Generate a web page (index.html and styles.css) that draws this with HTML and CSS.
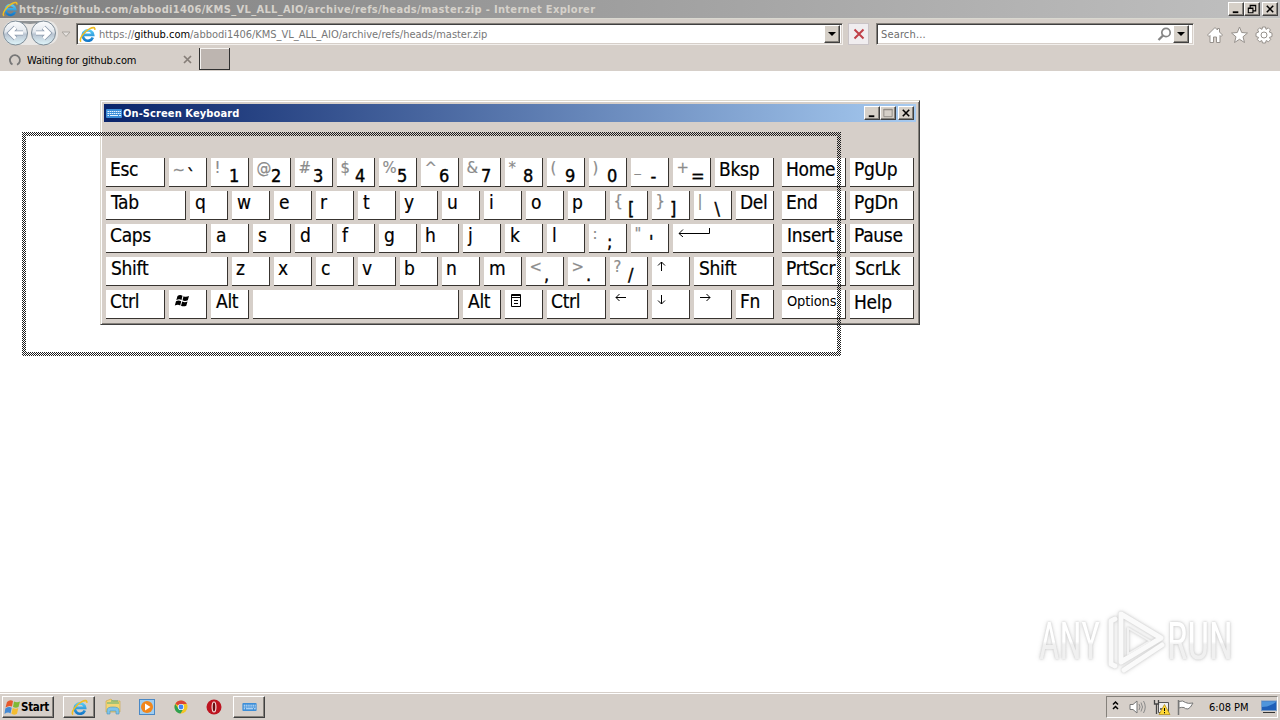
FILE: index.html
```
<!DOCTYPE html>
<html lang="en">
<head>
<meta charset="utf-8">
<title>On-Screen Keyboard</title>
<link rel="stylesheet" href="styles.css">
</head>
<body>
<svg class="defs" width="0" height="0">
  <defs>
    <linearGradient id="blue" x1="0" y1="0" x2="0" y2="1"><stop offset="0" stop-color="#55c8f4"/><stop offset="1" stop-color="#1479c9"/></linearGradient>
    <linearGradient id="nav" x1="0" y1="0" x2="0" y2="1"><stop offset="0" stop-color="#fbfcfd"/><stop offset=".45" stop-color="#e3e8ee"/><stop offset=".55" stop-color="#b9c4d1"/><stop offset="1" stop-color="#e0f6fb"/></linearGradient>
    <linearGradient id="logo" x1="0" y1="0" x2="0" y2="1"><stop offset=".5" stop-color="#fff"/><stop offset=".55" stop-color="#f0f0f0"/></linearGradient>
    <symbol id="ie" viewBox="0 0 16 16">
      <path d="M13 10.800A4.900 4.900 0 1 1 13.300 8.300H4.500" fill="none" stroke="url(#blue)" stroke-width="2.500"/>
      <path d="M2 14.800C-.5 13 4.200 5.500 10.200 2.500 13 1.100 15.400.9 14.800 3.700" fill="none" stroke="#f0bd22" stroke-width="1.500"/>
    </symbol>
    <symbol id="kbd" viewBox="0 0 16 9">
      <rect width="16" height="9" rx="1" fill="#3d8ed8"/>
      <path d="M1.500 2.500H15M1.500 4.500H15" stroke="#e8f4ff" stroke-width="1" stroke-dasharray="1.500 .6"/>
      <path d="M1.500 6.500H3M4 6.500H12M13 6.500H15" stroke="#e8f4ff"/>
    </symbol>
  </defs>
</svg>

<header class="browser">
  <div class="titlebar">
    <svg class="title-ie" width="16" height="16"><use href="#ie"/></svg>
    <span class="title-text">https://github.com/abbodi1406/KMS_VL_ALL_AIO/archive/refs/heads/master.zip - Internet Explorer</span>
    <div class="winbtns">
      <svg class="wb" viewBox="0 0 15 13"><path d="M4 10H10" stroke="#000" stroke-width="2"/></svg>
      <svg class="wb" viewBox="0 0 15 13"><path d="M5.500 5V2.500H11.500V8.500H9M5 3H12M3.500 5.500H8.500V10.500H3.500ZM3 6H9" fill="none" stroke="#000" stroke-width="1.200"/></svg>
      <svg class="wb last" viewBox="0 0 15 13"><path d="M4 3L11 10M11 3L4 10" stroke="#000" stroke-width="1.700"/></svg>
    </div>
  </div>
  <div class="toolbar">
    <svg class="nav" width="72" height="28" viewBox="0 0 72 28">
      <path d="M14 1H44Q57 2 57 14T44 26H14Q2 25 2 14T14 1Z" fill="#e9e7e5"/>
      <path d="M12 2H46Q29 8 12 2" fill="#8f9294"/>
      <circle cx="14.500" cy="14" r="12" fill="url(#nav)" stroke="#7e8c97"/>
      <circle cx="42.500" cy="14" r="12" fill="url(#nav)" stroke="#7e8c97"/>
      <path d="M22 14H9M14.500 8.500L9 14L14.500 19.500M35 14H48M42.500 8.500L48 14L42.500 19.500" fill="none" stroke="#8c9bad" stroke-width="5"/>
      <path d="M22 14H9M14.500 8.500L9 14L14.500 19.500M35 14H48M42.500 8.500L48 14L42.500 19.500" fill="none" stroke="#fff" stroke-width="3.400"/>
      <path d="M61 13H69L65 17.500Z" fill="#e5e1de" stroke="#aaa59f"/>
    </svg>
    <div class="field address">
      <svg width="17" height="17"><use href="#ie"/></svg>
      <span class="url">https://<b>github.com</b>/abbodi1406/KMS_VL_ALL_AIO/archive/refs/heads/master.zip</span>
      <span class="drop"></span>
    </div>
    <div class="stop"><svg width="12" height="12" viewBox="0 0 12 12"><path d="M1.500 1.500L10.500 10.500M10.500 1.500L1.500 10.500" stroke="#c04048" stroke-width="2"/></svg></div>
    <div class="field search">
      <span class="hint">Search...</span>
      <svg width="15" height="15" viewBox="0 0 15 15"><circle cx="9" cy="5.500" r="4.200" fill="none" stroke="#858585" stroke-width="1.700"/><path d="M6 8.500L1.500 13" stroke="#858585" stroke-width="2.300"/></svg>
      <span class="drop"></span>
    </div>
    <svg class="tools" width="70" height="20" viewBox="0 0 70 20" fill="#fff" stroke="#96918c">
      <path d="M1.500 10L9 2.500L11.500 5V3.500H13.500V7L16.500 10L15 11.500L14 10.500V17.500H10.500V12H7.500V17.500H4V10.500L3 11.500Z"/>
      <path d="M33.500 2L35.700 7.500L41.500 8L37 11.800L38.500 17.500L33.500 14.300L28.500 17.500L30 11.800L25.500 8L31.300 7.500Z"/>
      <g transform="translate(58 10)"><path d="M-1.500-8H1.500L2-5.600L4.300-7.200L6.400-5.100L5.300-3L8-1.800V1.500L5.400 2.400L6.700 4.500L4.400 6.800L2.200 5.500L1.500 8H-1.500L-2.200 5.500L-4.400 6.800L-6.700 4.500L-5.400 2.400L-8 1.500V-1.800L-5.300-3L-6.400-5.100L-4.300-7.200L-2-5.600Z"/><circle r="3"/></g>
    </svg>
  </div>
  <div class="tabs">
    <div class="tab">
      <svg width="14" height="14" viewBox="0 0 14 14"><path d="M4.500 11.500A5 5 0 1 1 9 11.700" fill="none" stroke="#777" stroke-width="1.800"/></svg>
      <span class="tab-text">Waiting for github.com</span>
      <svg class="tab-x" width="9" height="9" viewBox="0 0 9 9"><path d="M1 1L8 8M8 1L1 8" stroke="#857e78" stroke-width="1.700"/></svg>
    </div>
    <div class="newtab"></div>
  </div>
</header>

<main class="page">
  <section class="osk">
    <div class="osk-title">
      <svg width="16" height="9"><use href="#kbd"/></svg>
      <span class="osk-name">On-Screen Keyboard</span>
      <div class="winbtns">
        <svg class="wb" viewBox="0 0 15 13"><path d="M4 10H10" stroke="#000" stroke-width="2"/></svg>
        <svg class="wb" viewBox="0 0 15 13"><path d="M3 2.500H12V10.500H3ZM2.500 3H12.500" fill="none" stroke="#8d8983"/></svg>
        <svg class="wb last" viewBox="0 0 15 13"><path d="M4 3L11 10M11 3L4 10" stroke="#000" stroke-width="1.700"/></svg>
      </div>
    </div>
    <div class="keys">
      <div class="main">
        <div class="row"><div class="key w59">Esc</div><div class="key tilde"><i>~</i><b>`</b></div><div class="key"><i>!</i><b>1</b></div><div class="key"><i>@</i><b>2</b></div><div class="key"><i>#</i><b>3</b></div><div class="key"><i>$</i><b>4</b></div><div class="key"><i>%</i><b>5</b></div><div class="key"><i>^</i><b>6</b></div><div class="key"><i>&amp;</i><b>7</b></div><div class="key"><i>*</i><b>8</b></div><div class="key"><i>(</i><b>9</b></div><div class="key"><i>)</i><b>0</b></div><div class="key"><i class="up">_</i><b class="dash">-</b></div><div class="key"><i>+</i><b>=</b></div><div class="key grow">Bksp</div></div>
        <div class="row"><div class="key w80 in">Tab</div><div class="key in">q</div><div class="key in">w</div><div class="key in">e</div><div class="key">r</div><div class="key in">t</div><div class="key">y</div><div class="key in">u</div><div class="key in">i</div><div class="key in">o</div><div class="key">p</div><div class="key"><i>{</i><b>[</b></div><div class="key"><i>}</i><b>]</b></div><div class="key"><i>|</i><b class="back">\</b></div><div class="key grow">Del</div></div>
        <div class="row"><div class="key w101">Caps</div><div class="key in">a</div><div class="key in">s</div><div class="key in">d</div><div class="key in">f</div><div class="key in">g</div><div class="key">h</div><div class="key in">j</div><div class="key in">k</div><div class="key in">l</div><div class="key"><i>:</i><b>;</b></div><div class="key"><i>"</i><b>'</b></div><div class="key grow"><svg width="34" height="13" viewBox="0 0 34 13"><path d="M2 9.500H32.500V4M6 5.500L2 9.500L6 13" fill="none" stroke="#000"/></svg></div></div>
        <div class="row"><div class="key w122 in">Shift</div><div class="key">z</div><div class="key">x</div><div class="key in">c</div><div class="key">v</div><div class="key">b</div><div class="key">n</div><div class="key in">m</div><div class="key"><i>&lt;</i><b>,</b></div><div class="key"><i>&gt;</i><b>.</b></div><div class="key"><i>?</i><b>/</b></div><div class="key"><svg width="12" height="16" viewBox="0 0 12 16"><path d="M5.500 14V5M2 8.500L5.500 5L9 8.500" fill="none" stroke="#000"/></svg></div><div class="key grow in">Shift</div></div>
        <div class="row"><div class="key w59">Ctrl</div><div class="key"><svg width="18" height="20" viewBox="0 0 18 20"><path d="M4.500 6Q7 4 9.500 5.800L8.500 10Q6 8.500 3.300 10.200ZM10.500 6.200Q13 7.500 16 6L14.800 10.200Q12 11.500 9.500 10.300ZM3 11.200Q5.500 9.800 8.200 11.200L7.200 15.500Q5 14 1.800 15.600ZM9.200 11.500Q12 13 14.500 11.500L13.300 15.700Q10.500 17 8 15.700Z"/></svg></div><div class="key in">Alt</div><div class="key space"></div><div class="key in">Alt</div><div class="key"><svg width="16" height="20" viewBox="0 0 16 20"><path d="M2.500 4.500H11.500V16.500H2.500ZM2 5.500H12M2 7.500H12M5 10.500H9M5 13.500H9" fill="none" stroke="#000"/></svg></div><div class="key w59">Ctrl</div><div class="key"><svg width="14" height="16" viewBox="0 0 14 16"><path d="M2 7.500H12M5.500 4L2 7.500L5.500 11" fill="none" stroke="#000"/></svg></div><div class="key"><svg width="12" height="16" viewBox="0 0 12 16"><path d="M5.500 5V14M2 10.500L5.500 14L9 10.500" fill="none" stroke="#000"/></svg></div><div class="key"><svg width="14" height="16" viewBox="0 0 14 16"><path d="M2 7.500H12M8.500 4L12 7.500L8.500 11" fill="none" stroke="#000"/></svg></div><div class="key grow">Fn</div></div>
      </div>
      <div class="side">
        <div class="key">Home</div><div class="key">PgUp</div>
        <div class="key">End</div><div class="key">PgDn</div>
        <div class="key in">Insert</div><div class="key">Pause</div>
        <div class="key">PrtScr</div><div class="key in">ScrLk</div>
        <div class="key small">Options</div><div class="key help">Help</div>
      </div>
    </div>
  </section>

  <svg class="drag" width="819" height="224">
    <defs><pattern id="checker" width="2" height="2" patternUnits="userSpaceOnUse"><path d="M0 0H1V1H0ZM1 1H2V2H1Z" fill="#1c1c1c" shape-rendering="crispEdges"/></pattern></defs>
    <rect x="2" y="2" width="815" height="220" fill="none" stroke="url(#checker)" stroke-width="4"/>
  </svg>

  <svg class="watermark" width="220" height="72" viewBox="0 0 220 72">
    <g fill="url(#logo)" font-family="Roboto" font-size="52" font-weight="400">
      <text x="8" y="50" textLength="61" lengthAdjust="spacingAndGlyphs">ANY</text>
      <text x="136" y="50" textLength="66" lengthAdjust="spacingAndGlyphs">RUN</text>
    </g>
    <g fill="none" stroke-linejoin="round" stroke-linecap="round" stroke="#fafafa" stroke-width="5">
      <path d="M84 10L80 12V55L84 57M90 5L130 29L90 53ZM93 61L131 36"/>
      <path d="M97 19L119 32L97 45Z" stroke="#f2f2f2" stroke-width="2"/>
    </g>
  </svg>
</main>

<footer class="taskbar">
  <div class="start">
    <svg width="17" height="17" viewBox="0 0 17 17"><path d="M3 3Q6 0 9 2L8 7.500Q5 6 1.500 8.500Z" fill="#e6592c"/><path d="M10 2.500Q13 4 16 2.500L14.500 8Q12 9.500 9 8Z" fill="#7fb934"/><path d="M1.300 9.500Q5 7 7.700 8.700L6.500 14.500Q4 12.500.5 15Z" fill="#4389d4"/><path d="M8.700 9Q12 10.500 14.300 9L13 14.700Q10 16.500 7.400 14.800Z" fill="#f4bd30"/></svg>
    <span>Start</span>
  </div>
  <div class="task"><svg width="17" height="17"><use href="#ie"/></svg></div>
  <svg class="q q1" width="18" height="18" viewBox="0 0 18 18"><path d="M2 3L7 1L9 3H16V14H2Z" fill="#f3d675" stroke="#c9a444" stroke-width=".6"/><path d="M3 5H15M7 3H14" stroke="#5ab073"/><path d="M3 16V12Q3 9 9 9T15 12V16H12V13H6V16Z" fill="#7fc4ea" stroke="#4a94bd" stroke-width=".6"/></svg>
  <svg class="q q2" width="16" height="16" viewBox="0 0 16 16"><rect x=".5" y=".5" width="15" height="15" fill="#9fcdf0" stroke="#4a88c5"/><circle cx="8" cy="8" r="6" fill="#f1861b"/><path d="M6 4.500L11.500 8L6 11.500Z" fill="#fff"/></svg>
  <svg class="q q3" width="14" height="14" viewBox="0 0 14 14"><circle cx="7" cy="7" r="6.500" fill="#f4c524"/><path d="M7 7L1.400 3.700A6.500 6.500 0 0 1 12.800 4H7Z" fill="#dc4437"/><path d="M1.200 4A6.500 6.500 0 0 0 6.500 13.500L9 9.500L4 8Z" fill="#2ea052"/><circle cx="7" cy="7" r="3.100" fill="#fff"/><circle cx="7" cy="7" r="2.400" fill="#4285f4"/></svg>
  <svg class="q q4" width="16" height="16" viewBox="0 0 16 16"><circle cx="8" cy="8" r="7.500" fill="#bd1420"/><ellipse cx="8" cy="8" rx="1.900" ry="5" fill="#6b0d12" stroke="#f6dcdc" stroke-width="1.200"/></svg>
  <div class="task t2"><svg width="15" height="8"><use href="#kbd"/></svg></div>
  <div class="tray">
    <svg width="90" height="18" viewBox="0 0 90 18">
      <path d="M6 6.500L8.500 4L11 6.500M6 11L8.500 8.500L11 11" fill="none" stroke="#000" stroke-width="1.500"/>
      <path d="M23 6.500H26L30 3V15L26 11.500H23Z" fill="#fff" stroke="#777"/><path d="M32 6Q34 9 32 12M34 4.500Q37 9 34 13.500M36.500 3Q40 9 36.500 15" fill="none" stroke="#8a8a8a"/>
      <path d="M51.500 4.500H61.500V14.500H51.500Z" fill="#eee" stroke="#555"/><path d="M47.500 2V6H51.500V2M49.500 6V16M53 11H58" fill="none" stroke="#444" stroke-width="1.300"/><path d="M57.500 6.500L63 16.500H52Z" fill="#ffd834" stroke="#a98412" stroke-width=".7"/><path d="M57.500 10V13M57.500 14V15.300" stroke="#000"/>
      <path d="M71.500 2V17" stroke="#777" stroke-width="1.500"/><path d="M72 3.500Q76 2 78.500 4.500Q81 6 86 5L83.500 9L81 11Q78 11 77 9.500Q74 9 72 10Z" fill="#fff" stroke="#777"/>
    </svg>
    <span class="clock">6:08 PM</span>
    <svg width="16" height="14" viewBox="0 0 16 14"><rect x=".5" y="1" width="15" height="9.500" fill="#1f5fb8" stroke="#7b9cc5"/><path d="M1 7Q8 7 15 2V1.500H1Z" fill="#4f95dc"/><path d="M2 12.500H14" stroke="#333"/></svg>
  </div>
</footer>
</body>
</html>
```
FILE: styles.css
```
* { box-sizing: border-box; }
body { margin: 0; width: 1280px; height: 720px; overflow: hidden; display: flex; flex-direction: column; background: #fff; font-family: "DejaVu Sans Condensed", "DejaVu Sans", sans-serif; font-stretch: condensed; font-size: 11px; color: #000; }
svg { display: block; flex: none; }
.defs { position: absolute; }
span { white-space: nowrap; }
.browser { height: 71px; background: #d6cfc9; flex: none; }
.titlebar { height: 18px; display: flex; align-items: center; padding: 0 2px; background: linear-gradient(90deg, #808080, #c0c0c0); }
.title-text { color: #d6d2cb; font-weight: 700; margin-left: 1px; letter-spacing: .33px; }
.winbtns { margin-left: auto; display: flex; }
.wb { width: 16px; height: 14px; background: #d6d0c8; border: 1px solid; border-color: #fff #404040 #404040 #fff; box-shadow: inset -1px -1px #85817b; }
.wb.last { margin-left: 2px; }
.toolbar { height: 30px; display: flex; align-items: flex-start; border-top: 1px solid #d9d8d0; }
.nav { margin: 0 0 0 1px; }
.field { height: 22px; margin-top: 4px; display: flex; align-items: center; background: #fff; border: 1px solid; border-color: #85817b #f2efec #f2efec #85817b; box-shadow: inset 1px 1px #404040, inset -1px -1px #d6cfc9; }
.address { width: 767px; margin-left: 3px; padding: 0 2px; }
.url { color: #777; margin-left: 3px; letter-spacing: -.025px; }
.url b { font-weight: 400; color: #000; }
.drop { width: 16px; height: 18px; margin-left: auto; background: #d6d0c8; border: 1px solid; border-color: #fff #404040 #404040 #fff; box-shadow: inset -1px -1px #85817b; display: flex; align-items: center; justify-content: center; }
.drop::after { content: ""; border: 4px solid transparent; border-top-color: #000; border-bottom: 0; }
.stop { width: 21px; height: 22px; margin: 4px 0 0 5px; background: #f0edef; border: 1px solid #c9c3c6; display: flex; align-items: center; justify-content: center; }
.search { width: 318px; margin-left: 7px; padding: 0 4px; }
.search svg { margin-left: auto; }
.search .drop { margin-left: 1px; }
.hint { color: #6d6d6d; letter-spacing: .15px; }
.tools { margin: 6px 0 0 12px; }
.tabs { height: 22px; display: flex; }
.tab { width: 199px; height: 23px; padding-left: 8px; display: flex; align-items: center; }
.tab-text { margin-left: 5px; letter-spacing: -.17px; padding-top: 1px; }
.tab-x { margin-left: auto; margin-right: 7px; }
.newtab { width: 31px; height: 22px; background: #bdb5b0; border: 1px solid #303030; border-width: 0 1px 1px 1px; box-shadow: inset 1px 1px #f5f3f1; }
.page { height: 621px; flex: none; position: relative; }
.osk { position: absolute; left: 100px; top: 29px; width: 820px; height: 225px; background: #d6cfc9; border: 1px solid; border-color: #dcd8ce #404040 #404040 #dcd8ce; box-shadow: inset 1px 1px #fff, inset -1px -1px #85817b; padding: 3px; }
.osk-title { height: 18px; display: flex; align-items: center; padding: 0 2px; background: linear-gradient(90deg, #0a246a, #a6caf0); color: #fff; }
.osk-name { font-weight: 700; margin-left: 1px; letter-spacing: .1px; }
.keys { display: flex; gap: 8px; padding: 36px 2px 0; font-size: 19px; }
.main { width: 668px; display: flex; flex-direction: column; gap: 4px; }
.row { display: flex; gap: 4px; }
.side { display: grid; grid-template-columns: 64px 64px; gap: 4px; }
.key { width: 38px; height: 29px; flex: none; background: #fff; border-right: 1px solid #383430; border-bottom: 1px solid #383430; padding-left: 4px; line-height: 22px; letter-spacing: -.3px; white-space: nowrap; overflow: hidden; display: flex; -webkit-text-stroke: .2px #000; }
.key.in { padding-left: 5px; }
.side .key { width: 64px; }
.key.w59 { width: 59px; }
.key.w80 { width: 80px; }
.key.w101 { width: 101px; }
.key.w122 { width: 122px; }
.key.space { width: 206px; }
.key.grow { width: auto; flex: 1; }
.key.small { font-size: 14.500px; line-height: 22px; padding-left: 5px; letter-spacing: -.15px; -webkit-text-stroke: 0; }
.key.help { line-height: 24px; }
.key i { width: 14px; margin-left: -.5px; font-style: normal; font-size: 16.500px; line-height: 20px; color: #8b8b8b; -webkit-text-stroke: .2px #8b8b8b; }
.key b { font-weight: 400; font-size: 18px; line-height: 36px; margin-left: .5px; -webkit-text-stroke: .4px #000; }
.key .up { font-size: 14px; line-height: 18px; }
.key .back { margin-left: 3px; }
.key .dash { margin-left: 2px; }
.key.tilde b { line-height: 36px; }
.key.tilde i { line-height: 23px; }
.drag { position: absolute; left: 22px; top: 61px; }
.watermark { position: absolute; left: 1031px; top: 538px; filter: drop-shadow(0 0 1px #c8c8c8) drop-shadow(0 0 2px #e2e2e2); }
.taskbar { height: 28px; flex: none; display: flex; align-items: center; background: #d6cfc9; border-top: 1px solid #d6cfc9; box-shadow: inset 0 1px #fff; padding: 1px 2px 0 2px; }
.start { width: 52px; height: 22px; display: flex; align-items: center; gap: 0; padding-left: 1px; font-weight: 700; font-size: 11.500px; letter-spacing: -.3px; border: 1px solid; border-color: #fff #404040 #404040 #fff; box-shadow: inset -1px -1px #85817b; }
.task { width: 32px; height: 22px; margin-left: 9px; display: flex; align-items: center; justify-content: center; border: 1px solid; border-color: #fff #404040 #404040 #fff; box-shadow: inset -1px -1px #85817b; }
.q1 { margin-left: 9px; }
.q2 { margin-left: 17px; }
.q3 { margin-left: 19px; }
.q4 { margin-left: 18px; }
.t2 { margin-left: 11px; }
.tray { width: 172px; height: 22px; margin-left: auto; display: flex; align-items: center; border: 1px solid; border-color: #85817b #fff #fff #85817b; }
.clock { margin-left: 12px; margin-right: auto; letter-spacing: -.05px; }
```
